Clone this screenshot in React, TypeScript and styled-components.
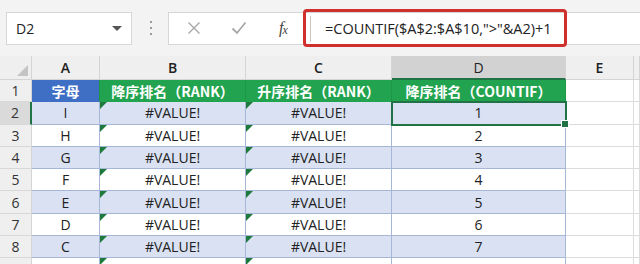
import styled, { createGlobalStyle } from "styled-components";

const GlobalStyle = createGlobalStyle`
  html, body {
    margin: 0;
    padding: 0;
    background: #f3f3f3;
    font-family: "Noto Sans CJK SC", "Noto Sans", sans-serif;
    overflow: hidden;
  }
`;

const blueFill = "#d9e1f2";
const blueLine = "#a6b6d6";
const greyLine = "#dcdcdc";
const excelGreen = "#217346";

const Page = styled.div`
  width: 640px;
  height: 264px;
  overflow: hidden;
  background: #f3f3f3;
`;

const Toolbar = styled.div`
  display: flex;
  align-items: center;
  height: 56px;
  padding: 0 0 0 6px;
  box-sizing: border-box;
`;

const NameBox = styled.div`
  display: flex;
  align-items: center;
  justify-content: space-between;
  width: 126px;
  height: 33px;
  box-sizing: border-box;
  padding: 0 9px 0 9px;
  background: #fff;
  border: 1px solid #d6d6d6;
  font-family: "Open Sans", "Noto Sans", sans-serif;
  font-size: 14px;
  color: #222;
`;

const DropArrow = styled.span`
  width: 0;
  height: 0;
  border-left: 5px solid transparent;
  border-right: 5px solid transparent;
  border-top: 5px solid #555;
`;

const Grip = styled.div`
  display: flex;
  flex-direction: column;
  gap: 4px;
  margin: 0 16px 0 18px;
  span {
    width: 2px;
    height: 2px;
    background: #9a9a9a;
  }
`;

const FormulaBar = styled.div`
  flex: 1;
  display: flex;
  align-items: center;
  height: 33px;
  padding-left: 2px;
  background: #fff;
  border: 1px solid #d6d6d6;
  border-right: none;
  box-sizing: border-box;
`;

const IconButton = styled.div`
  width: 45px;
  display: flex;
  justify-content: center;
  align-items: center;
`;

const FxLabel = styled.span`
  width: 44px;
  text-align: center;
  font-family: "Liberation Serif", serif;
  font-style: italic;
  font-size: 16px;
  color: #444;
  letter-spacing: -1px;
  sub {
    font-size: 12px;
    vertical-align: -1px;
  }
`;

const FormulaInput = styled.div`
  display: flex;
  align-items: center;
  width: 264px;
  height: 38px;
  margin-left: -2px;
  box-sizing: border-box;
  border: 3px solid #d0302c;
  border-radius: 4px;
  padding-left: 19px;
  font-family: "Open Sans", "Noto Sans", sans-serif;
  font-size: 14.5px;
  color: #222;
  position: relative;
  &::before {
    content: "";
    position: absolute;
    left: 4px;
    top: 4px;
    bottom: 2px;
    width: 1px;
    background: #c8c8c8;
  }
`;

const Sheet = styled.div`
  display: grid;
  grid-template-columns: 32px 68px 146px 146px 174px 68px 1fr;
  grid-auto-rows: 22.3px;
  grid-template-rows: 24px;
  background: #fff;
`;

const Corner = styled.div`
  background: #efefef;
  border-right: 1px solid #d4d4d4;
  border-bottom: 1px solid #d4d4d4;
  position: relative;
  &::after {
    content: "";
    position: absolute;
    right: 3px;
    bottom: 3px;
    border-left: 11px solid transparent;
    border-bottom: 11px solid #c4c4c4;
  }
`;

const ColHead = styled.div<{ $active?: boolean }>`
  display: flex;
  align-items: center;
  justify-content: center;
  background: ${(p) => (p.$active ? "#d2d2d2" : "#efefef")};
  border-right: 1px solid #d4d4d4;
  border-bottom: ${(p) => (p.$active ? `2px solid ${excelGreen}` : "1px solid #d4d4d4")};
  font-family: "Open Sans", "Noto Sans", sans-serif;
  font-size: 14px;
  color: #222;
  font-weight: ${(p) => (p.$active ? 400 : 600)};
`;

const RowHead = styled.div<{ $active?: boolean }>`
  display: flex;
  align-items: center;
  justify-content: center;
  background: ${(p) => (p.$active ? "#dadada" : "#efefef")};
  border-right: ${(p) => (p.$active ? `2px solid ${excelGreen}` : "1px solid #d4d4d4")};
  border-bottom: 1px solid #d8d8d8;
  font-family: "Open Sans", "Noto Sans", sans-serif;
  font-size: 14px;
  color: #333;
`;

type CellKind = "plain" | "band" | "empty" | "blueHead" | "greenHead";

const cellBg: Record<CellKind, string> = {
  plain: "#fff",
  band: blueFill,
  empty: "#fff",
  blueHead: "#3f6fc4",
  greenHead: "#22a34f",
};

const Cell = styled.div<{ $kind: CellKind; $flag?: boolean; $selected?: boolean }>`
  position: relative;
  display: flex;
  align-items: center;
  justify-content: center;
  box-sizing: border-box;
  background: ${(p) => cellBg[p.$kind]};
  border-right: 1px solid
    ${(p) => (p.$kind === "empty" ? greyLine : p.$kind.endsWith("Head") ? "#1d9646" : blueLine)};
  border-bottom: 1px solid
    ${(p) => (p.$kind === "empty" ? greyLine : p.$kind.endsWith("Head") ? cellBg[p.$kind] : blueLine)};
  font-size: 14px;
  font-family: ${(p) =>
    p.$kind.endsWith("Head") ? `"Noto Sans CJK SC", sans-serif` : `"Open Sans", "Noto Sans", sans-serif`};
  font-weight: ${(p) => (p.$kind.endsWith("Head") ? 700 : 400)};
  color: ${(p) => (p.$kind.endsWith("Head") ? "#fff" : "#222")};
  white-space: nowrap;
  ${(p) =>
    p.$flag &&
    `&::before {
      content: "";
      position: absolute;
      left: 0;
      top: 0;
      border-top: 7px solid #1e7a3c;
      border-right: 7px solid transparent;
    }`}
  ${(p) =>
    p.$selected &&
    `outline: 2px solid ${excelGreen};
     outline-offset: -1px;
     z-index: 1;`}
`;

const FillHandle = styled.span`
  position: absolute;
  right: -4px;
  bottom: -4px;
  width: 6px;
  height: 6px;
  background: ${excelGreen};
  border: 1px solid #fff;
`;

const letters = ["I", "H", "G", "F", "E", "D", "C", "B"];
const columns = ["A", "B", "C", "D", "E", ""];

export default function App() {
  return (
    <Page>
      <GlobalStyle />
      <Toolbar>
        <NameBox>
          D2
          <DropArrow />
        </NameBox>
        <Grip>
          <span />
          <span />
          <span />
        </Grip>
        <FormulaBar>
          <IconButton>
            <svg width="14" height="14" viewBox="0 0 14 14">
              <path d="M1.5 1.5 L12.5 12.5 M12.5 1.5 L1.5 12.5" stroke="#a8a8a8" strokeWidth="1.4" fill="none" />
            </svg>
          </IconButton>
          <IconButton>
            <svg width="16" height="14" viewBox="0 0 16 14">
              <path d="M1.5 7.5 L6 12 L14.5 1.5" stroke="#a8a8a8" strokeWidth="1.8" fill="none" />
            </svg>
          </IconButton>
          <FxLabel>
            f<sub>x</sub>
          </FxLabel>
          <FormulaInput>=COUNTIF($A$2:$A$10,"&gt;"&amp;A2)+1</FormulaInput>
        </FormulaBar>
      </Toolbar>
      <Sheet>
        <Corner />
        {columns.map((c) => (
          <ColHead key={c || "next"} $active={c === "D"}>
            {c}
          </ColHead>
        ))}

        <RowHead>1</RowHead>
        <Cell $kind="blueHead">字母</Cell>
        <Cell $kind="greenHead">降序排名（RANK）</Cell>
        <Cell $kind="greenHead">升序排名（RANK）</Cell>
        <Cell $kind="greenHead">降序排名（COUNTIF）</Cell>
        <Cell $kind="empty" />
        <Cell $kind="empty" />

        {letters.map((l, i) => {
          const kind: CellKind = i % 2 === 0 ? "band" : "plain";
          return [
            <RowHead key={`h${i}`} $active={i === 0}>
              {i + 2}
            </RowHead>,
            <Cell key={`a${i}`} $kind={kind}>
              {l}
            </Cell>,
            <Cell key={`b${i}`} $kind={kind} $flag>
              #VALUE!
            </Cell>,
            <Cell key={`c${i}`} $kind={kind} $flag>
              #VALUE!
            </Cell>,
            <Cell key={`d${i}`} $kind={kind} $selected={i === 0}>
              {i + 1}
              {i === 0 && <FillHandle />}
            </Cell>,
            <Cell key={`e${i}`} $kind="empty" />,
            <Cell key={`f${i}`} $kind="empty" />,
          ];
        })}
      </Sheet>
    </Page>
  );
}
